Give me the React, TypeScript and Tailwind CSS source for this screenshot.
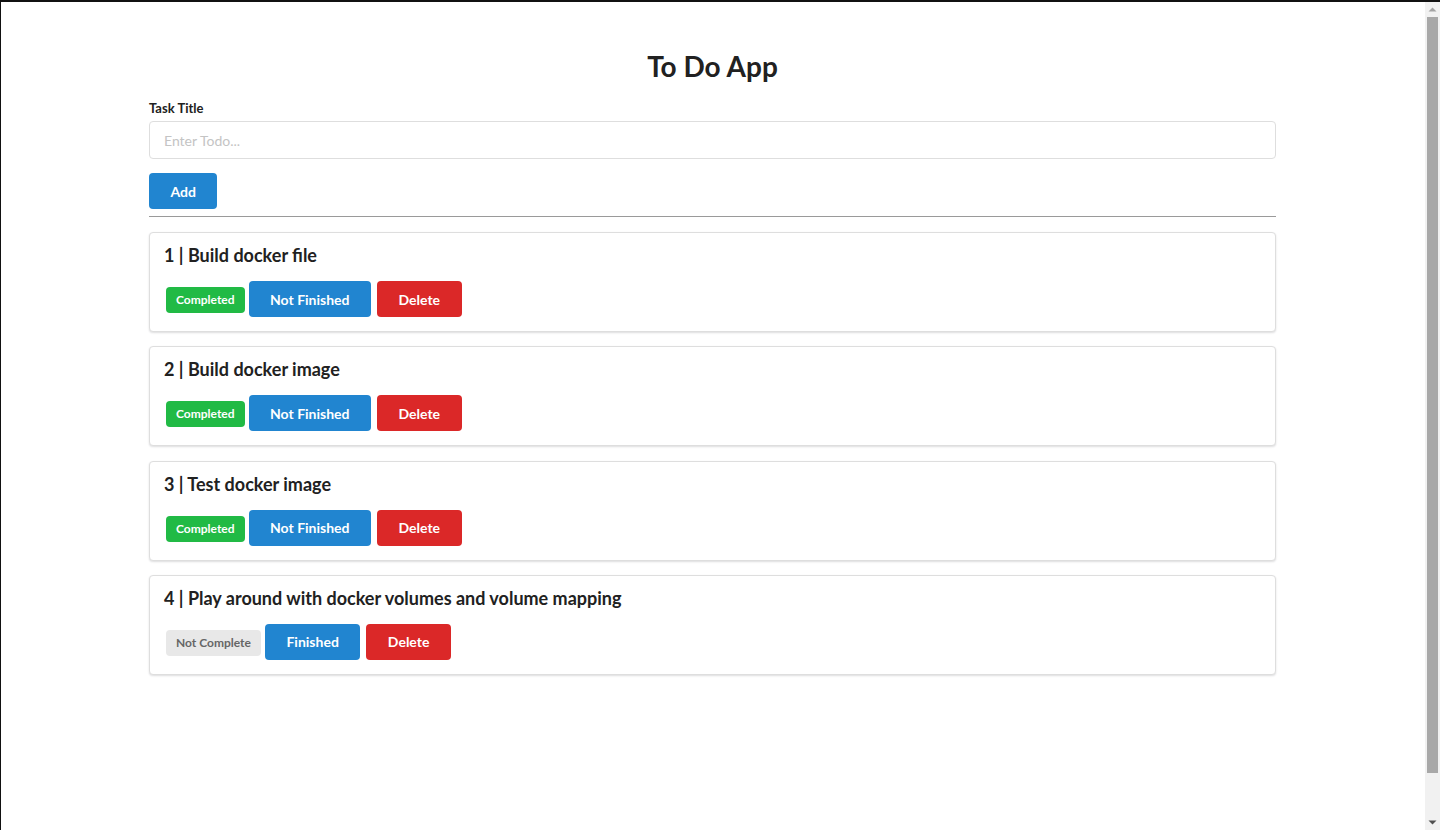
import React from "react";

type Task = { id: number; title: string; done: boolean };

const tasks: Task[] = [
  { id: 1, title: "Build docker file", done: true },
  { id: 2, title: "Build docker image", done: true },
  { id: 3, title: "Test docker image", done: true },
  { id: 4, title: "Play around with docker volumes and volume mapping", done: false },
];

function TaskCard({ task }: { task: Task }) {
  return (
    <div className="rounded-[4px] border border-[#dedede] bg-white px-[14px] pt-[11px] pb-[14px] shadow-[0_1px_2px_0_rgba(34,36,38,0.15)]">
      <h3 className="text-[18px] font-bold leading-[22px] text-[#212121]">
        {task.id} | {task.title}
      </h3>
      <div className="mt-[15px] flex items-center">
        {task.done ? (
          <span className="ml-[2px] mt-[2px] rounded-[4px] bg-[#21ba45] px-[10px] py-[7px] text-[12px] font-bold leading-[12px] text-white">
            Completed
          </span>
        ) : (
          <span className="ml-[2px] mt-[2px] rounded-[4px] bg-[#e8e8e8] px-[10px] py-[7px] text-[12px] font-bold leading-[12px] text-[#666666]">
            Not Complete
          </span>
        )}
        <button className="ml-[4px] h-9 rounded-[4px] bg-[#2185d0] px-[21.5px] text-[14px] font-bold text-white">
          {task.done ? "Not Finished" : "Finished"}
        </button>
        <button className="ml-[6px] h-9 rounded-[4px] bg-[#db2828] px-[21.5px] text-[14px] font-bold text-white">
          Delete
        </button>
      </div>
    </div>
  );
}

function Scrollbar() {
  return (
    <div className="flex w-[15px] shrink-0 flex-col bg-[#f1f1f1]">
      <div className="flex h-[15px] items-center justify-center">
        <svg width="9" height="5" viewBox="0 0 9 5">
          <path d="M0.5 4.5 L4.5 0.5 L8.5 4.5 Z" fill="#a3a3a3" />
        </svg>
      </div>
      <div className="mx-auto h-[756px] w-[11px] bg-[#a8a8a8]" />
      <div className="flex-1" />
      <div className="flex h-[15px] items-center justify-center">
        <svg width="9" height="5" viewBox="0 0 9 5">
          <path d="M0.5 0.5 L8.5 0.5 L4.5 4.5 Z" fill="#505050" />
        </svg>
      </div>
    </div>
  );
}

export default function App() {
  return (
    <div
      className="flex h-[830px] w-[1440px] overflow-hidden border-t-2 border-l border-[#111111] bg-white"
      style={{ fontFamily: "Lato, 'Helvetica Neue', Arial, sans-serif" }}
    >
      <main className="flex-1">
        <div className="ml-[148px] w-[1127px]">
          <h1 className="mt-[47px] text-center text-[28px] font-bold leading-[34px] text-[#212121]">
            To Do App
          </h1>
          <label className="mt-[17px] block text-[13px] font-bold leading-[16px] text-[#212121]">
            Task Title
          </label>
          <input
            type="text"
            placeholder="Enter Todo..."
            className="mt-[5px] block h-[38px] w-full rounded-[4px] border border-[#dedede] px-[14px] text-[14px] text-[#212121] outline-none placeholder:text-[#c4c4c4]"
          />
          <button className="mt-[14px] h-9 rounded-[4px] bg-[#2185d0] px-[21.5px] text-[14px] font-bold text-white">
            Add
          </button>
          <div className="mt-[7px] h-px bg-[#9a9a9a]" />
          <div className="mt-[15px] flex flex-col gap-[14.33px]">
            {tasks.map((t) => (
              <TaskCard key={t.id} task={t} />
            ))}
          </div>
        </div>
      </main>
      <Scrollbar />
    </div>
  );
}
